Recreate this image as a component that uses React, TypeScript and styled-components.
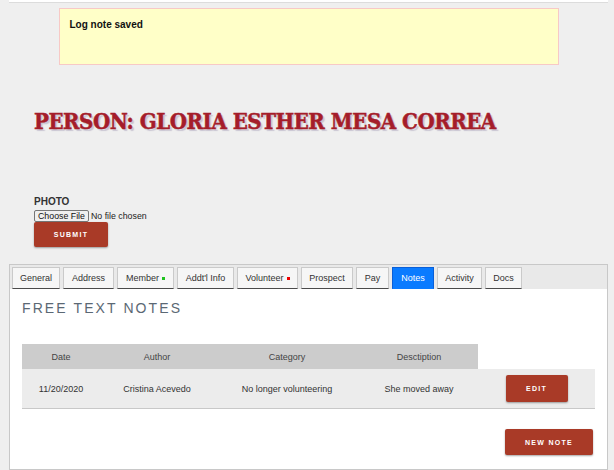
import React from "react";
import styled, { createGlobalStyle } from "styled-components";

const GlobalStyle = createGlobalStyle`
  html, body {
    margin: 0;
    padding: 0;
    background: #efefef;
    font-family: "Liberation Sans", Arial, sans-serif;
    color: #333;
  }
`;

const Page = styled.div`
  width: 599px;
  margin-left: 9px;
`;

const TopStrip = styled.div`
  height: 2px;
  background: #fff;
  border-bottom: 1px solid #dcdcdc;
`;

const Notice = styled.div`
  box-sizing: border-box;
  width: 500px;
  height: 57px;
  margin: 5px auto 0;
  padding: 10px;
  background: #ffffc8;
  border: 1px solid #f7c9c6;
  font-size: 10px;
  line-height: 12px;
  font-weight: bold;
  color: #111;
`;

const Title = styled.h1`
  margin: 43px 0 0;
  padding-left: 25px;
  font-family: "DejaVu Serif", "Liberation Serif", serif;
  font-stretch: condensed;
  font-weight: bold;
  font-size: 22px;
  line-height: 26px;
  letter-spacing: -0.45px;
  color: #a51d2a;
  -webkit-text-stroke: 0.5px #a51d2a;
  text-shadow: 2px 2px 1px rgba(70, 50, 110, 0.22);
`;

const UploadForm = styled.form`
  margin-top: 62px;
  padding-left: 25px;
  display: flex;
  flex-direction: column;
  align-items: flex-start;
`;

const FieldLabel = styled.label`
  font-size: 10px;
  line-height: 12px;
  font-weight: bold;
  color: #333;
  text-transform: uppercase;
`;

const FileInput = styled.input`
  display: block;
  margin: 2px 0 0;
  font-family: "Liberation Sans", Arial, sans-serif;
  font-size: 8.8px;
  line-height: 10px;
  height: 12px;
  color: #222;

  &::file-selector-button {
    font: inherit;
    height: 12px;
    margin: 0 2px 0 0;
    padding: 0 3px;
    border: 1px solid #767676;
    border-radius: 2px;
    background: #efefef;
    color: #111;
  }
`;

const RedButton = styled.button<{ $w: number; $h: number }>`
  width: ${(p) => p.$w}px;
  height: ${(p) => p.$h}px;
  padding: 0;
  border: none;
  border-radius: 2px;
  background: #a93a27;
  box-shadow: 0 1px 2px rgba(0, 0, 0, 0.35);
  color: #fff;
  font-family: "Liberation Sans", Arial, sans-serif;
  font-weight: bold;
  font-size: 7px;
  letter-spacing: 1.3px;
  text-transform: uppercase;
  cursor: pointer;
`;

const Panel = styled.section`
  margin-top: 17px;
  border: 1px solid #c8c8c8;
  background: #fff;
`;

const TabBar = styled.nav`
  display: flex;
  gap: 3px;
  height: 24px;
  padding: 2px 0 0 2px;
  box-sizing: border-box;
  background: #e9e9e9;
`;

const Tab = styled.div<{ $w: number; $active?: boolean }>`
  box-sizing: border-box;
  width: ${(p) => p.$w}px;
  height: 22px;
  display: flex;
  align-items: center;
  justify-content: center;
  gap: 3px;
  font-size: 9px;
  background: ${(p) => (p.$active ? "#0a7bff" : "#f6f6f6")};
  color: ${(p) => (p.$active ? "#fff" : "#333")};
  border: 1px solid ${(p) => (p.$active ? "#0a5fd8" : "#cacaca")};
  border-bottom: 1px solid ${(p) => (p.$active ? "#0a7bff" : "#4a4a4a")};
`;

const Dot = styled.span<{ $color: string }>`
  width: 3px;
  height: 3px;
  background: ${(p) => p.$color};
`;

const Content = styled.div`
  padding: 0 12px 14px;
  display: flex;
  flex-direction: column;
`;

const SectionTitle = styled.h2`
  margin: 11px 0 0;
  font-size: 14px;
  line-height: 16px;
  font-weight: normal;
  letter-spacing: 2.1px;
  color: #5b6874;
`;

const NotesTable = styled.table`
  margin-top: 28px;
  width: 573px;
  border-collapse: collapse;
  table-layout: fixed;
  font-size: 9px;
`;

const HeadCell = styled.th<{ $empty?: boolean }>`
  height: 25px;
  padding: 0;
  font-weight: normal;
  color: #444;
  background: ${(p) => (p.$empty ? "transparent" : "#cccccc")};
`;

const BodyRow = styled.tr`
  background: #ececec;
  border-bottom: 1px solid #c8c8c8;
`;

const Cell = styled.td`
  height: 39px;
  padding: 0;
  text-align: center;
  color: #333;
`;

const Footer = styled.div`
  display: flex;
  justify-content: flex-end;
  margin-top: 20px;
  padding-right: 2px;
`;

const tabs = [
  { label: "General", w: 48 },
  { label: "Address", w: 51 },
  { label: "Member", w: 57, dot: "#1fc21f" },
  { label: "Addt'l Info", w: 57 },
  { label: "Volunteer", w: 61, dot: "#ee0000" },
  { label: "Prospect", w: 52 },
  { label: "Pay", w: 33 },
  { label: "Notes", w: 42, active: true },
  { label: "Activity", w: 45 },
  { label: "Docs", w: 37 },
];

const columns = [
  { label: "Date", w: 78 },
  { label: "Author", w: 114 },
  { label: "Category", w: 146 },
  { label: "Desctiption", w: 118 },
  { label: "", w: 117 },
];

const notes = [
  {
    date: "11/20/2020",
    author: "Cristina Acevedo",
    category: "No longer volunteering",
    description: "She moved away",
  },
];

export default function App() {
  return (
    <>
      <GlobalStyle />
      <Page>
        <TopStrip />
        <Notice>Log note saved</Notice>
        <Title>PERSON: GLORIA ESTHER MESA CORREA</Title>

        <UploadForm onSubmit={(e) => e.preventDefault()}>
          <FieldLabel htmlFor="photo">Photo</FieldLabel>
          <FileInput id="photo" type="file" />
          <RedButton $w={74} $h={25} type="submit">
            Submit
          </RedButton>
        </UploadForm>

        <Panel>
          <TabBar>
            {tabs.map((t) => (
              <Tab key={t.label} $w={t.w} $active={t.active}>
                {t.label}
                {t.dot && <Dot $color={t.dot} />}
              </Tab>
            ))}
          </TabBar>

          <Content>
            <SectionTitle>FREE TEXT NOTES</SectionTitle>
            <NotesTable>
              <colgroup>
                {columns.map((c, i) => (
                  <col key={i} style={{ width: c.w }} />
                ))}
              </colgroup>
              <thead>
                <tr>
                  {columns.map((c, i) => (
                    <HeadCell key={i} $empty={!c.label}>
                      {c.label}
                    </HeadCell>
                  ))}
                </tr>
              </thead>
              <tbody>
                {notes.map((n) => (
                  <BodyRow key={n.date}>
                    <Cell>{n.date}</Cell>
                    <Cell>{n.author}</Cell>
                    <Cell>{n.category}</Cell>
                    <Cell>{n.description}</Cell>
                    <Cell>
                      <RedButton $w={62} $h={27}>
                        Edit
                      </RedButton>
                    </Cell>
                  </BodyRow>
                ))}
              </tbody>
            </NotesTable>
            <Footer>
              <RedButton $w={88} $h={26}>
                New Note
              </RedButton>
            </Footer>
          </Content>
        </Panel>
      </Page>
    </>
  );
}
